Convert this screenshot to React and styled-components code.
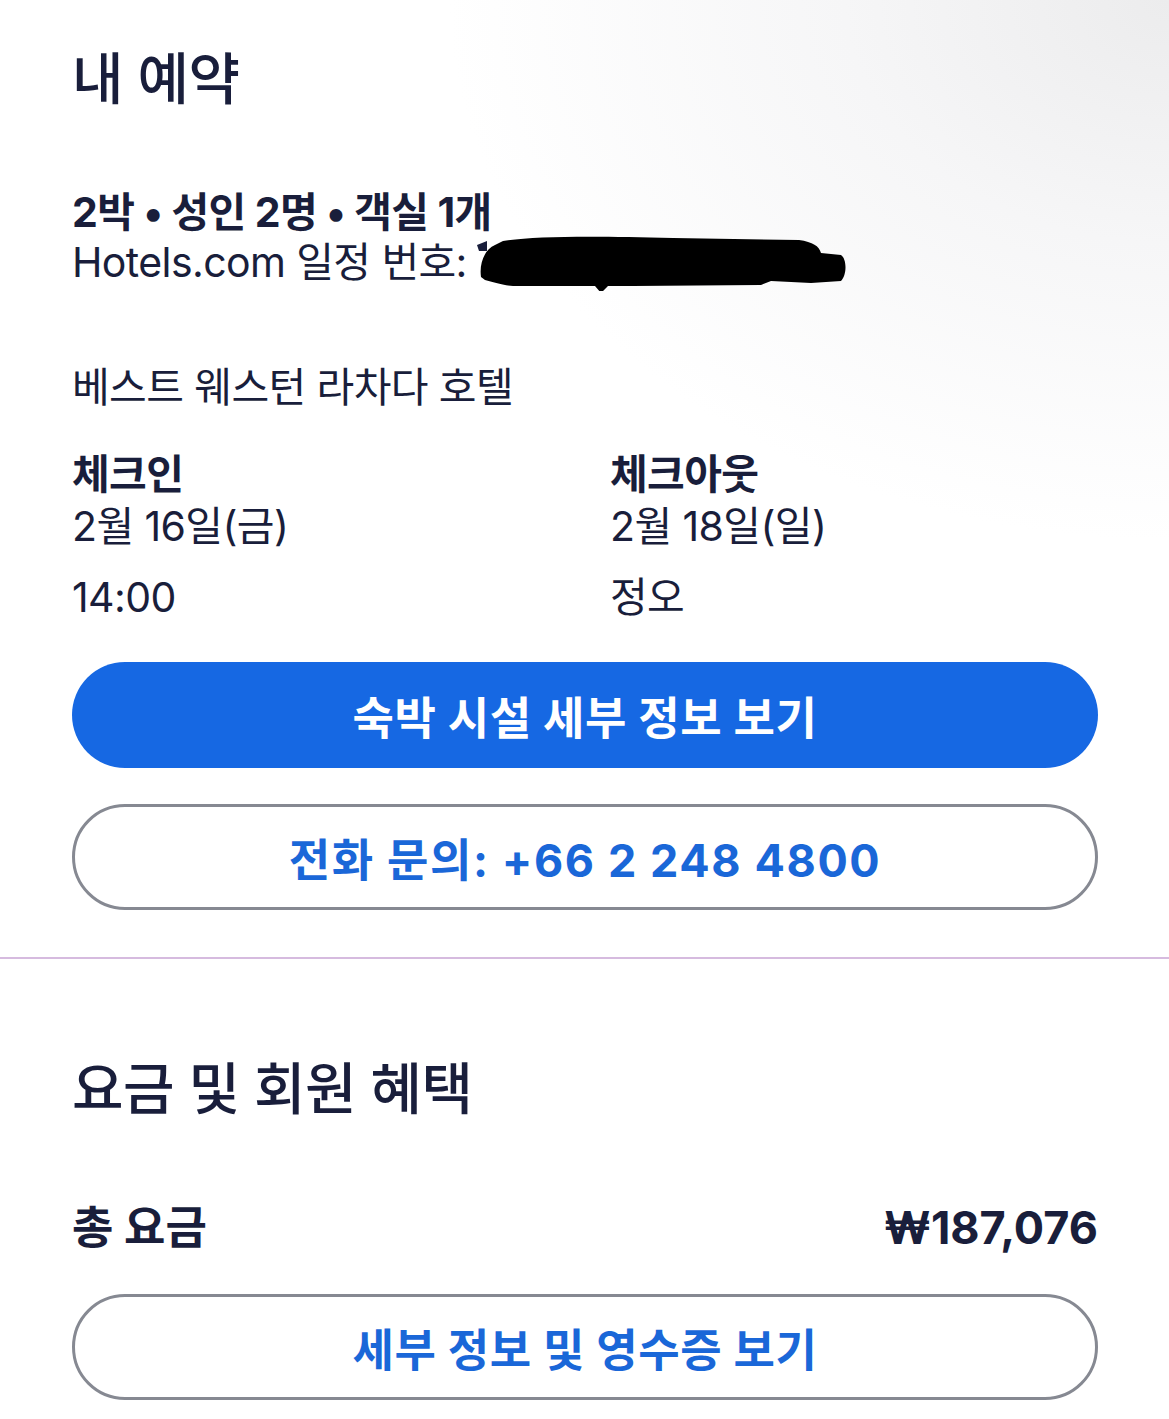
import React from "react";
import styled, { createGlobalStyle } from "styled-components";

const Global = createGlobalStyle`
  html, body { margin: 0; padding: 0; background: #fff; }
  body {
    font-family: Inter, "Noto Sans CJK KR", "Noto Sans", sans-serif;
    color: #191e3b;
    -webkit-font-smoothing: antialiased;
  }
`;

const Page = styled.div`
  width: 1169px;
  min-height: 1419px;
  background: radial-gradient(ellipse 720px 540px at 100% 0%, #ececed 0%, #f6f6f7 45%, #ffffff 100%);
  overflow: hidden;
`;

const Section = styled.section`
  padding: ${(p) => p.$pad};
  display: flex;
  flex-direction: column;
`;

const Title = styled.h1`
  margin: 0;
  font-size: 56px;
  font-weight: 500;
  line-height: 64px;
  letter-spacing: -0.5px;
`;

const Line = styled.div`
  font-size: 41px;
  line-height: 50px;
  font-weight: ${(p) => (p.$bold ? 700 : 400)};
  letter-spacing: -0.6px;
  white-space: nowrap;
  margin-top: ${(p) => p.$mt || 0}px;
  display: flex;
  align-items: center;
`;

const Redact = styled.svg`
  width: 376px;
  height: 58px;
  margin: -4px 0 -4px 6px;
  flex: none;
`;

const DateGrid = styled.div`
  display: grid;
  grid-template-columns: 538px 1fr;
  margin-top: ${(p) => p.$mt}px;
`;

const Col = styled.div`
  display: flex;
  flex-direction: column;
`;

const PillButton = styled.button`
  display: flex;
  align-items: center;
  justify-content: center;
  width: 100%;
  height: 106px;
  border-radius: 53px;
  font-family: inherit;
  font-size: 45px;
  font-weight: 700;
  letter-spacing: ${(p) => p.$spacing ?? 0}px;
  margin-top: ${(p) => p.$mt}px;
  padding: 0;
  cursor: pointer;
  background: ${(p) => (p.$primary ? "#1668e3" : "#ffffff")};
  color: ${(p) => (p.$primary ? "#ffffff" : "#1a67d8")};
  border: ${(p) => (p.$primary ? "none" : "3px solid #868992")};
`;

const Divider = styled.hr`
  margin: 47px 0 0;
  border: none;
  height: 2px;
  background: #d6bbdf;
`;

const PriceRow = styled.div`
  display: flex;
  justify-content: space-between;
  align-items: center;
  font-size: 45px;
  line-height: 56px;
  font-weight: 700;
  letter-spacing: 0;
  margin-top: ${(p) => p.$mt}px;
`;

export default function App() {
  return (
    <Page>
      <Global />
      <Section $pad="47px 71px 0 72px">
        <Title>내 예약</Title>
        <Line $bold $mt={76}>2박 • 성인 2명 • 객실 1개</Line>
        <Line>
          Hotels.com 일정 번호:
          <Redact viewBox="0 0 376 58" aria-hidden="true">
            <path d="M4 12 L14 8 L14 18 L6 18 Z" fill="#191e3b" />
            <path
              d="M8 44 C6 30 12 16 22 12 L30 8 C60 3 120 3 200 5 L326 7 C340 9 346 13 348 20 L368 22 C374 26 374 42 368 48 L338 50 L298 48 L288 52 L160 53 L135 53 L128 60 L122 53 L40 53 C28 52 20 49 12 47 Z"
              fill="#000"
            />
          </Redact>
        </Line>
        <Line $mt={75}>베스트 웨스턴 라차다 호텔</Line>
        <DateGrid $mt={37}>
          <Col>
            <Line $bold>체크인</Line>
            <Line $mt={2}>2월 16일(금)</Line>
            <Line $mt={21}>14:00</Line>
          </Col>
          <Col>
            <Line $bold>체크아웃</Line>
            <Line $mt={2}>2월 18일(일)</Line>
            <Line $mt={21}>정오</Line>
          </Col>
        </DateGrid>
        <PillButton $primary $mt={40} $spacing={0.6}>숙박 시설 세부 정보 보기</PillButton>
        <PillButton $mt={36} $spacing={1.6}>전화 문의: +66 2 248 4800</PillButton>
      </Section>
      <Divider />
      <Section $pad="98px 71px 0 72px">
        <Title>요금 및 회원 혜택</Title>
        <PriceRow $mt={79}>
          <span>총 요금</span>
          <span>₩187,076</span>
        </PriceRow>
        <PillButton $mt={38} $spacing={0.6}>세부 정보 및 영수증 보기</PillButton>
      </Section>
    </Page>
  );
}
